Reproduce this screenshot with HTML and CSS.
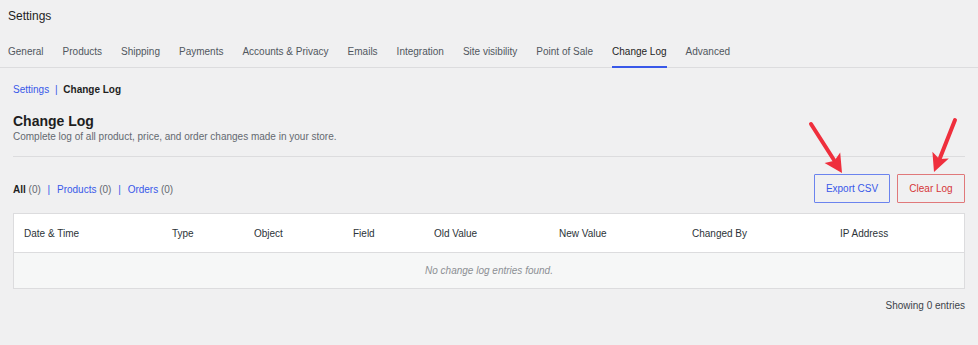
FILE: index.html
```html
<!DOCTYPE html>
<html lang="en">

<head>
  <meta charset="UTF-8" />
  <meta name="viewport" content="width=device-width, initial-scale=1.0" />
  <title>Settings - Change Log</title>
  <link rel="stylesheet" href="styles.css">
</head>

<body>
  <div class="page-title">Settings</div>

  <!-- settings tabs -->
  <div class="tabs">
    <span class="tab">General</span>
    <span class="tab">Products</span>
    <span class="tab">Shipping</span>
    <span class="tab">Payments</span>
    <span class="tab">Accounts &amp; Privacy</span>
    <span class="tab">Emails</span>
    <span class="tab">Integration</span>
    <span class="tab">Site visibility</span>
    <span class="tab">Point of Sale</span>
    <span class="tab active">Change Log</span>
    <span class="tab">Advanced</span>
  </div>

  <div class="content">
    <div class="crumbs">
      <a href="#">Settings</a>
      <span class="sep">|</span>
      <b>Change Log</b>
    </div>

    <h2 class="heading">Change Log</h2>
    <p class="desc">Complete log of all product, price, and order changes made in your store.</p>
    <hr class="rule" />

    <div class="toolbar">
      <div class="filters">
        <b>All</b> <span class="count">(0)</span>
        <span class="sep">|</span>
        <a href="#">Products</a> <span class="count">(0)</span>
        <span class="sep">|</span>
        <a href="#">Orders</a> <span class="count">(0)</span>
      </div>
      <div class="actions">
        <button class="btn btn-blue">Export CSV</button>
        <button class="btn btn-red">Clear Log</button>
      </div>
    </div>

    <!-- log table -->
    <div class="log">
      <div class="log-head">
        <span>Date &amp; Time</span>
        <span>Type</span>
        <span>Object</span>
        <span>Field</span>
        <span>Old Value</span>
        <span>New Value</span>
        <span>Changed By</span>
        <span>IP Address</span>
      </div>
      <div class="log-empty">No change log entries found.</div>
    </div>

    <div class="showing">Showing 0 entries</div>
  </div>

  <!-- annotation arrows drawn over the page -->
  <svg class="arrows" width="978" height="345" viewBox="0 0 978 345">
    <line x1="811" y1="124" x2="834" y2="160" stroke="#ef2f3d" stroke-width="4" stroke-linecap="round" />
    <polygon points="842,173 824.6,163 834.4,160.8 840.2,152.6" fill="#ef2f3d" />
    <line x1="955" y1="120" x2="940" y2="158" stroke="#ef2f3d" stroke-width="4" stroke-linecap="round" />
    <polygon points="934,172 932.4,151.8 939.3,159 948.8,158.6" fill="#ef2f3d" />
  </svg>
</body>

</html>
```

FILE: styles.css
```css
* {
  margin: 0;
  padding: 0;
  box-sizing: border-box;
}

body {
  background: #f0f0f1;
  font-family: "Liberation Sans", Arial, sans-serif;
  font-size: 10px;
  color: #1e1e1e;
  width: 978px;
  position: relative;
}

a {
  color: #3858e9;
  text-decoration: none;
}

.page-title {
  padding: 8px 8px 0;
  font-size: 12px;
  line-height: 16px;
  color: #1e1e1e;
}

.tabs {
  display: flex;
  gap: 19px;
  margin-top: 12px;
  padding: 0 8px;
  border-bottom: 1px solid #dcdcde;
}

.tab {
  padding: 9px 0 7px;
  line-height: 14px;
  color: #50575e;
  border-bottom: 2px solid transparent;
  margin-bottom: -1px;
}

.tab.active {
  color: #1e1e1e;
  border-bottom-color: #3858e9;
}

.content {
  padding: 0 13px;
}

.crumbs {
  margin-top: 15px;
  line-height: 14px;
}

.crumbs .sep {
  color: #3858e9;
  margin: 0 3px;
}

.crumbs b {
  color: #1e1e1e;
}

.heading {
  margin-top: 15px;
  font-size: 14px;
  line-height: 18px;
  font-weight: bold;
  color: #1e1e1e;
}

.desc {
  line-height: 14px;
  color: #646970;
}

.rule {
  margin-top: 12px;
  border: none;
  border-top: 1px solid #dcdcde;
}

.toolbar {
  margin-top: 17px;
  height: 29px;
  display: flex;
  align-items: center;
  justify-content: space-between;
}

.filters {
  line-height: 14px;
  padding-top: 3px;
}

.filters b {
  color: #1e1e1e;
}

.filters .count {
  color: #646970;
}

.filters .sep {
  color: #3858e9;
  margin: 0 4px;
}

.actions {
  display: flex;
  gap: 7px;
}

.btn {
  height: 29px;
  background: transparent;
  font: 10px "Liberation Sans", Arial, sans-serif;
  padding: 0;
  white-space: nowrap;
  border-radius: 1px;
  cursor: pointer;
}

.btn-blue {
  width: 76px;
  color: #3858e9;
  border: 1px solid #6b83ee;
}

.btn-red {
  width: 68px;
  color: #d63638;
  border: 1px solid #e0787a;
}

.log {
  margin-top: 10px;
  border: 1px solid #dcdcde;
}

.log-head {
  display: grid;
  grid-template-columns: 148px 82px 99px 81px 125px 133px 148px 134px;
  height: 39px;
  align-items: center;
  background: #fff;
  border-bottom: 1px solid #dcdcde;
  color: #2c3338;
}

.log-head span {
  padding-left: 10px;
}

.log-empty {
  height: 35px;
  line-height: 35px;
  text-align: center;
  font-style: italic;
  color: #8c8f94;
  background: #f6f7f7;
}

.showing {
  margin-top: 10px;
  line-height: 14px;
  text-align: right;
  color: #3c434a;
}

.arrows {
  position: absolute;
  top: 0;
  left: 0;
  pointer-events: none;
}
```
